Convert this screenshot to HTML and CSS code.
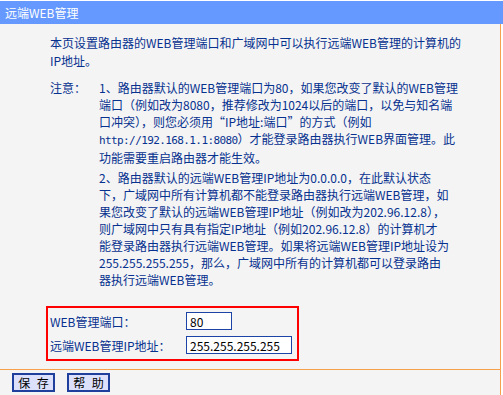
FILE: index.html
```html
<!DOCTYPE html>
<html lang="zh-CN">
  <head>
    <meta charset="UTF-8" />
    <meta name="viewport" content="width=device-width, initial-scale=1.0" />
    <title>远端WEB管理</title>
    <link rel="stylesheet" href="styles.css">
  </head>
  <body>
    <div class="title-bar">远端WEB管理</div>
    <div class="panel">
      <div class="content">
        <p class="intro">
          本页设置路由器的WEB管理端口和广域网中可以执行远端WEB管理的计算机的<br />IP地址。
        </p>
        <div class="note">
          <div class="note-label">注意：</div>
          <div class="note-body">
            <p>
              1、路由器默认的WEB管理端口为80，如果您改变了默认的WEB管理<br />
              端口（例如改为8080，推荐修改为1024以后的端口，以免与知名端<br />
              口冲突），则您必须用“IP地址:端口”的方式（例如<br />
              <span class="url">http://192.168.1.1:8080</span>）才能登录路由器执行WEB界面管理。此<br />
              功能需要重启路由器才能生效。
            </p>
            <p class="item-2">
              2、路由器默认的远端WEB管理IP地址为0.0.0.0，在此默认状态<br />
              下，广域网中所有计算机都不能登录路由器执行远端WEB管理，如<br />
              果您改变了默认的远端WEB管理IP地址（例如改为202.96.12.8），<br />
              则广域网中只有具有指定IP地址（例如202.96.12.8）的计算机才<br />
              能登录路由器执行远端WEB管理。如果将远端WEB管理IP地址设为<br />
              255.255.255.255，那么，广域网中所有的计算机都可以登录路由<br />
              器执行远端WEB管理。
            </p>
          </div>
        </div>
        <form class="settings">
          <label class="field-label" for="port">WEB管理端口：</label>
          <input id="port" class="field field-short" type="text" value="80" />
          <label class="field-label" for="remoteIp">远端WEB管理IP地址：</label>
          <input id="remoteIp" class="field field-long" type="text" value="255.255.255.255" />
        </form>
      </div>
      <div class="actions">
        <button type="button">保 存</button>
        <button type="button">帮 助</button>
      </div>
    </div>
  </body>
</html>
```

FILE: styles.css
```css
body {
  margin: 0;
  background: #fff;
  font-family: "Noto Sans CJK SC", sans-serif;
  font-size: 12px;
  color: #06318f;
}

.title-bar {
  margin-top: 1px;
  height: 23px;
  line-height: 23px;
  padding-left: 5px;
  background: #6699ff;
  color: #fff;
}

.panel {
  width: 500px;
  background: #f4f4f4;
  border-right: 1px solid #f7a04c;
}

.content {
  padding: 10px 0 8px 50px;
}

.intro {
  margin: 0;
  line-height: 18px;
}

.note {
  display: flex;
  margin-top: 9px;
  line-height: 17px;
}

.note-label {
  width: 49px;
  flex-shrink: 0;
}

.note-body p {
  margin: 0;
  white-space: nowrap;
}

.note-body .item-2 {
  margin-top: 3px;
}

.url {
  font-family: "DejaVu Sans Mono", monospace;
  font-size: 11px;
  letter-spacing: -0.6px;
}

.settings {
  display: grid;
  grid-template-columns: 136px auto;
  row-gap: 6px;
  align-items: center;
  width: 253px;
  box-sizing: border-box;
  margin: 18px 0 0 -4px;
  padding: 4px 0 5px 2px;
  border: 2px solid #ff0000;
}

.field-label {
  line-height: 17px;
}

.field {
  justify-self: start;
  height: 18px;
  box-sizing: border-box;
  margin: 0;
  padding: 0 3px;
  border: 1px solid #1c43a6;
  background: #fff;
  color: #000;
  font-family: "Noto Sans CJK SC", sans-serif;
  font-size: 12px;
}

.field-short {
  width: 46px;
}

.field-long {
  width: 106px;
}

.actions {
  display: flex;
  gap: 12px;
  padding: 3px 12px;
  border-top: 1px solid #f7a04c;
  border-bottom: 1px solid #f7a04c;
}

.actions button {
  width: 43px;
  height: 19px;
  padding: 0;
  border: 2px solid #1f3f9c;
  background: #dde0fa;
  color: #000;
  font-family: "Noto Sans CJK SC", sans-serif;
  font-size: 12px;
  line-height: 15px;
  word-spacing: 4px;
  cursor: pointer;
}
```
